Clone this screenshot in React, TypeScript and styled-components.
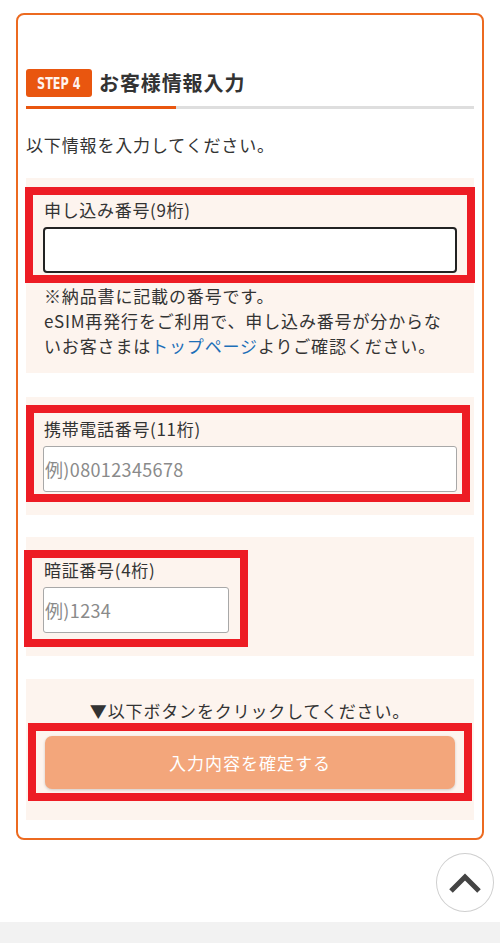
import React from 'react';
import styled, { createGlobalStyle } from 'styled-components';

const GlobalStyle = createGlobalStyle`
  html, body { margin: 0; padding: 0; background: #fff; }
  body {
    font-family: "Noto Sans CJK JP", "Noto Sans", sans-serif;
    color: #333;
  }
  * { box-sizing: border-box; }
`;

const Page = styled.div`
  width: 500px;
  min-height: 943px;
  display: flex;
  flex-direction: column;
`;

const Card = styled.div`
  margin: 13px 16px 0;
  border: 2px solid #ec6a20;
  border-radius: 8px;
  padding: 54px 8px 18px;
  display: flex;
  flex-direction: column;
`;

const Heading = styled.div`
  display: flex;
  align-items: center;
  gap: 7px;
  height: 28px;
`;

const StepBadge = styled.span`
  display: inline-flex;
  align-items: center;
  justify-content: center;
  width: 66px;
  height: 28px;
  border-radius: 3px;
  background: #e9560f;
  color: #fff3ee;
  font-family: "DejaVu Sans", "Liberation Sans", sans-serif;
  font-stretch: condensed;
  font-weight: 700;
  font-size: 16px;
  span { display: inline-block; transform: scaleX(0.78); white-space: nowrap; }
`;

const Title = styled.h2`
  margin: 0;
  font-size: 20px;
  font-weight: 700;
  letter-spacing: 0.045em;
  color: #333;
  line-height: 28px;
`;

const Rule = styled.div`
  margin-top: 9px;
  height: 3px;
  background: linear-gradient(to right, #e9560f 150px, #dedede 150px);
`;

const Intro = styled.p`
  margin: 24px 0 0;
  font-size: 17px;
  line-height: 24px;
  letter-spacing: 0.05em;
`;

const Section = styled.div<{ $top: number; $bottom: number }>`
  margin-top: ${p => p.$top}px;
  padding-bottom: ${p => p.$bottom}px;
  background: #fdf4ee;
  display: flex;
  flex-direction: column;
`;

const Frame = styled.div<{ $mt: number; $ml: number; $mr: number; $pad: string; $w?: number }>`
  margin: ${p => p.$mt}px ${p => p.$mr}px 0 ${p => p.$ml}px;
  ${p => (p.$w ? `width: ${p.$w}px; align-self: flex-start;` : 'align-self: stretch;')}
  border: 8px solid #ed1c24;
  padding: ${p => p.$pad};
  display: flex;
  flex-direction: column;
`;

const Label = styled.label`
  display: block;
  font-size: 17px;
  line-height: 22px;
  letter-spacing: 0.04em;
  margin-bottom: 6px;
  padding-left: 1px;
  white-space: nowrap;
`;

const Input = styled.input<{ $strong?: boolean }>`
  display: block;
  width: 100%;
  height: 46px;
  margin: 0;
  padding: 0 1px;
  background: #fff;
  border: ${p => (p.$strong ? '2px solid #222' : '1px solid #a8a8a8')};
  border-radius: ${p => (p.$strong ? '4px' : '3px')};
  font-family: "Noto Sans CJK JP", "Noto Sans", sans-serif;
  font-size: 18px;
  letter-spacing: 0.02em;
  color: #333;
  outline: none;
  &::placeholder { color: #8a8a8a; }
`;

const Note = styled.p`
  margin: 0;
  padding: 0 16px 0 18px;
  font-size: 17px;
  line-height: 25px;
  letter-spacing: 0.05em;
  a { color: #1d6fb8; text-decoration: none; }
`;

const Prompt = styled.p`
  margin: 20px 0 0;
  text-align: center;
  font-size: 17px;
  line-height: 24px;
  letter-spacing: 0.05em;
  white-space: nowrap;
`;

const SubmitButton = styled.button`
  width: 100%;
  height: 53px;
  border: none;
  border-radius: 7px;
  background: #f3a67b;
  color: #fff;
  font-family: "Noto Sans CJK JP", "Noto Sans", sans-serif;
  font-size: 17px;
  letter-spacing: 0.06em;
  box-shadow: 0 1px 3px rgba(0, 0, 0, 0.18);
  cursor: pointer;
`;

const ToTopRow = styled.div`
  display: flex;
  justify-content: flex-end;
  padding: 13px 6px 10px 0;
`;

const ToTop = styled.button`
  width: 58px;
  height: 59px;
  border-radius: 50%;
  border: 1px solid #cfcfcf;
  background: #fff;
  padding: 0;
  display: flex;
  align-items: center;
  justify-content: center;
  cursor: pointer;
`;

const Footer = styled.div`
  flex: 1;
  min-height: 40px;
  background: #f2f2f2;
`;

export default function App() {
  return (
    <Page>
      <GlobalStyle />
      <Card>
        <Heading>
          <StepBadge><span>STEP 4</span></StepBadge>
          <Title>お客様情報入力</Title>
        </Heading>
        <Rule />
        <Intro>以下情報を入力してください。</Intro>

        <Section $top={21} $bottom={15}>
          <Frame $mt={9} $ml={-1} $mr={-1} $pad="4px 10px 2px 10px">
            <Label>申し込み番号(9桁)</Label>
            <Input $strong />
          </Frame>
          <Note>
            ※納品書に記載の番号です。<br />
            eSIM再発行をご利用で、申し込み番号が分からないお客さまは<a href="#">トップページ</a>よりご確認ください。
          </Note>
        </Section>

        <Section $top={24} $bottom={13}>
          <Frame $mt={8} $ml={0} $mr={4} $pad="5px 5px 2px 9px">
            <Label>携帯電話番号(11桁)</Label>
            <Input placeholder="例)08012345678" />
          </Frame>
        </Section>

        <Section $top={22} $bottom={9}>
          <Frame $mt={13} $ml={-2} $mr={0} $w={224} $pad="1px 11px 6px 11px">
            <Label>暗証番号(4桁)</Label>
            <Input placeholder="例)1234" />
          </Frame>
        </Section>

        <Section $top={23} $bottom={19}>
          <Prompt>▼以下ボタンをクリックしてください。</Prompt>
          <Frame $mt={0} $ml={2} $mr={2} $pad="5px 9px 4px 9px">
            <SubmitButton>入力内容を確定する</SubmitButton>
          </Frame>
        </Section>
      </Card>

      <ToTopRow>
        <ToTop aria-label="ページトップへ">
          <svg width="34" height="22" viewBox="0 0 34 22">
            <polyline points="3,19 17,5 31,19" fill="none" stroke="#444" strokeWidth="5" strokeLinejoin="miter" />
          </svg>
        </ToTop>
      </ToTopRow>
      <Footer />
    </Page>
  );
}
